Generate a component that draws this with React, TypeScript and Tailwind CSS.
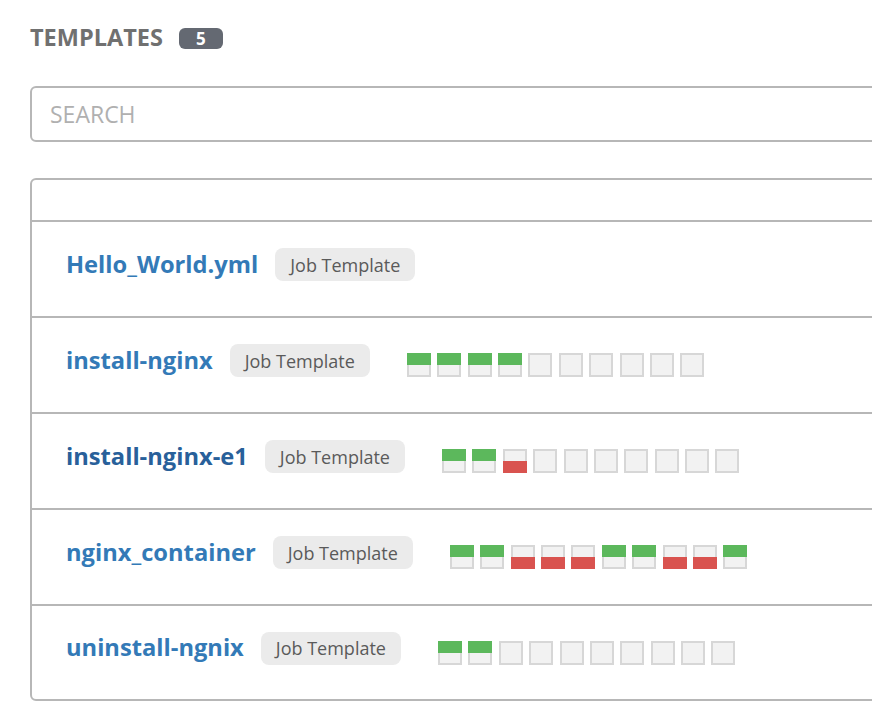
import React from 'react';

type Job = 'ok' | 'fail' | 'none';

interface Template {
  name: string;
  jobs: Job[];
  hover?: boolean;
}

const templates: Template[] = [
  { name: 'Hello_World.yml', jobs: [] },
  { name: 'install-nginx', jobs: ['ok', 'ok', 'ok', 'ok', 'none', 'none', 'none', 'none', 'none', 'none'] },
  { name: 'install-nginx-e1', jobs: ['ok', 'ok', 'fail', 'none', 'none', 'none', 'none', 'none', 'none', 'none'], hover: true },
  { name: 'nginx_container', jobs: ['ok', 'ok', 'fail', 'fail', 'fail', 'ok', 'ok', 'fail', 'fail', 'ok'] },
  { name: 'uninstall-ngnix', jobs: ['ok', 'ok', 'none', 'none', 'none', 'none', 'none', 'none', 'none', 'none'] },
];

const JobBox: React.FC<{ status: Job }> = ({ status }) => (
  <div className="relative w-[24px] h-[24px] border-2 border-[#d7d7d7] bg-[#f2f2f2] box-border">
    {status === 'ok' && <div className="absolute -left-[2px] -right-[2px] -top-[2px] h-[12px] bg-[#5cb85c]" />}
    {status === 'fail' && <div className="absolute -left-[2px] -right-[2px] -bottom-[2px] h-[12px] bg-[#d9534f]" />}
  </div>
);

const App: React.FC = () => {
  return (
    <div
      className="w-[872px] h-[728px] overflow-hidden bg-white pl-[30px] pt-[22px]"
      style={{ fontFamily: '"Open Sans", sans-serif' }}
    >
      <div className="w-[880px]">
        <div className="flex items-center h-[32px]">
          <span className="text-[23.5px] font-bold text-[#707070] leading-none">TEMPLATES</span>
          <span className="ml-[16px] w-[44px] h-[21px] rounded-[6px] bg-[#646972] text-white text-[17px] font-bold flex items-center justify-center leading-none">
            5
          </span>
        </div>

        <div className="mt-[32px] h-[56px] border-2 border-[#b7b7b7] rounded-[6px] flex items-center pl-[18px]">
          <span className="text-[23px] text-[#b0b0b0] leading-none">SEARCH</span>
        </div>

        <div className="mt-[36px] border-2 border-[#b7b7b7] rounded-[6px]">
          <div className="h-[42px] border-b-2 border-[#b7b7b7]" />
          {templates.map((t, i) => {
            const last = i === templates.length - 1;
            return (
              <div
                key={t.name}
                className={`flex items-center pl-[34px] ${last ? 'h-[93px]' : 'h-[96px] border-b-2 border-[#b7b7b7]'}`}
              >
                <div className="flex items-center mb-[9px]">
                  <span className={`text-[23.7px] font-bold leading-none ${t.hover ? 'text-[#28609a]' : 'text-[#337ab7]'}`}>
                    {t.name}
                  </span>
                  <span className="ml-[17px] h-[33px] px-[15px] rounded-[8px] bg-[#ebebeb] text-[#5a5a5a] text-[18px] flex items-center leading-none">
                    Job Template
                  </span>
                </div>
                {t.jobs.length > 0 && (
                  <div className="ml-[37px] flex gap-[6.4px]">
                    {t.jobs.map((j, k) => (
                      <JobBox key={k} status={j} />
                    ))}
                  </div>
                )}
              </div>
            );
          })}
        </div>
      </div>
    </div>
  );
};

export default App;
